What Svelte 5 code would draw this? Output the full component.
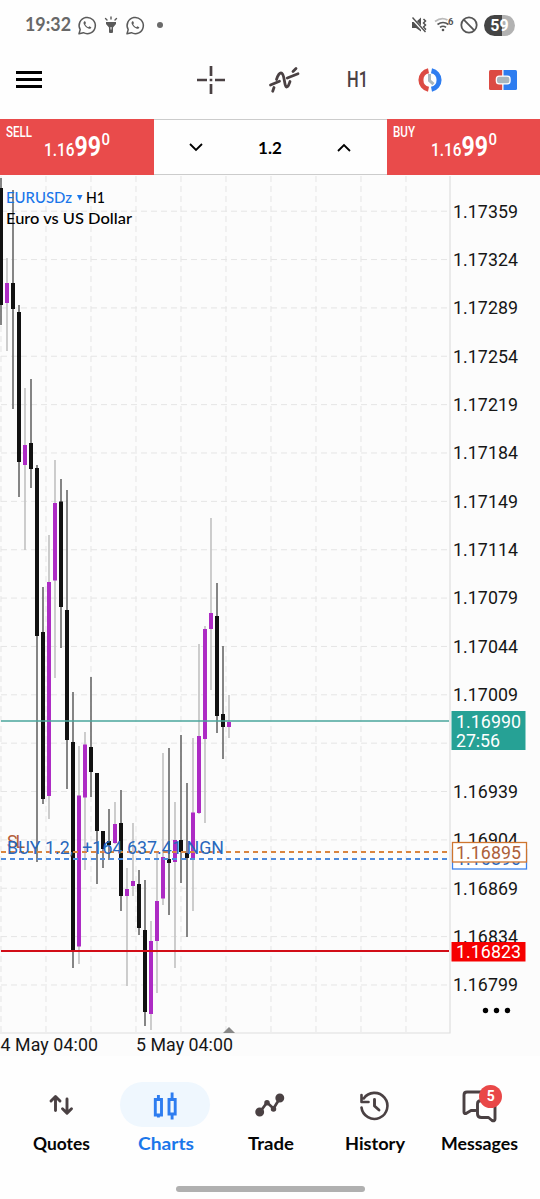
<script>
    const top = 175
    const gridX = [1, 46, 91, 136, 181, 226, 271, 316, 361, 406]
    const levels = Array.from({ length: 17 }, (_, i) => ({
        y: 211.2 + i * 48.36,
        price: (1.17359 - i * 0.00035).toFixed(5)
    }))

    // x, wick top, wick bottom, body top, body bottom, rising
    const candles = [
        [1, 178, 325, 188, 305, 0],
        [7, 258, 351, 283, 303, 1],
        [13, 190, 409, 283, 309, 0],
        [19, 305, 497, 312, 462, 0],
        [25, 388, 550, 445, 465, 1],
        [31, 379, 488, 443, 469, 0],
        [37, 465, 862, 468, 636, 0],
        [43, 587, 804, 632, 799, 0],
        [49, 535, 819, 582, 796, 1],
        [55, 460, 678, 503, 580.5, 1],
        [61, 479, 648, 501.5, 607, 0],
        [67, 490, 789, 610, 740, 0],
        [73, 692, 968, 742, 951, 0],
        [79, 746, 964, 795.5, 946.5, 1],
        [85, 732, 870, 744.5, 797.5, 1],
        [91, 677, 797, 747, 772, 0],
        [97, 773, 884, 773, 831, 0],
        [103, 831, 868, 831, 849, 0],
        [109, 809, 860, 841, 845, 0],
        [115, 802, 844, 824, 843, 1],
        [121, 790, 911, 823, 896, 0],
        [127, 868, 986, 889, 896, 1],
        [133, 823, 896, 881, 886, 1],
        [139, 870, 935, 884, 928, 0],
        [145, 880, 1026, 930, 1012, 0],
        [151, 921, 1030, 941, 1014, 1],
        [157, 852, 993, 901, 941, 1],
        [163, 753, 905, 857, 898.5, 1],
        [169, 748, 915, 859, 863, 0],
        [175, 802, 968, 840, 862, 1],
        [181, 735, 883, 840, 852, 0],
        [187, 783, 937, 853, 858, 0],
        [193, 738, 911, 812.5, 859, 1],
        [199, 644, 814, 736, 813, 1],
        [205, 626, 823, 629, 739, 1],
        [211, 518, 690, 613, 629, 1],
        [217, 583, 733, 616, 716, 0],
        [223, 646, 759, 714, 727, 0],
        [229, 695, 738, 722, 727, 1]
    ]

    const tabs = ["Quotes", "Charts", "Trade", "History", "Messages"]
    const tabWidths = [57, 56, 46, 60, 77]
</script>

{#snippet whatsapp()}
    <svg width="19" height="19" viewBox="0 0 19 19" fill="none" stroke="#5a5a5a" stroke-width="1.5">
        <path d="M1 17.8 2.2 13.6A8.1 8.1 0 1 1 5.4 16.7Z" stroke-linejoin="round" />
        <path d="M6.3 5.2c-.9.7-1 2-.3 3.3 1 1.900 2.500 3.300 4.400 4 1.300.5 2.500.1 3-1.100l-1.900-1.200-1.200 1c-1.500-.7-2.400-1.600-3.100-3l.8-1.100-.9-1.900Z" fill="#5a5a5a" stroke="none" />
    </svg>
{/snippet}

{#snippet quote(side)}
    <button class="quote">
        <span class="side">
            <svg width="60" height="16">
                <text x="0" y="12.5" font-size="14.5" textLength={side == "SELL" ? 26 : 22} lengthAdjust="spacingAndGlyphs">{side}</text>
            </svg>
        </span>
        <svg class="price" width="70" height="28">
            <text x="0" y="23" font-size="18" textLength="30.5" lengthAdjust="spacingAndGlyphs">1.16</text>
            <text x="30.5" y="23" font-size="28" font-weight="700" textLength="26.5" lengthAdjust="spacingAndGlyphs">99</text>
            <text x="57.5" y="12" font-size="17" textLength="8.5" lengthAdjust="spacingAndGlyphs">0</text>
        </svg>
    </button>
{/snippet}

<main>
    <header class="status">
        <svg class="clock" width="47" height="24">
            <text x="0" y="18" font-size="18" textLength="46" lengthAdjust="spacingAndGlyphs">19:32</text>
        </svg>
        {@render whatsapp()}
        <svg class="torch" width="14" height="18" viewBox="0 0 14 18" fill="#5a5a5a">
            <path d="M2 6h10v2L9 11.5V16q0 1-1 1H6q-1 0-1-1v-4.5L2 8Z" />
            <path d="M7 1v2M1.5 2.5 3 4M12.5 2.5 11 4" stroke="#5a5a5a" stroke-width="1.4" stroke-linecap="round" />
            <path d="M7 11v2.5" stroke="#fff" />
        </svg>
        {@render whatsapp()}
        <i class="dot"></i>
        <div class="signals">
            <svg width="17" height="18" viewBox="0 0 17 18">
                <path d="M1 6h4l5-4.5v14L5 12H1Z" fill="#505050" />
                <path d="m12.5 3 2 2-2 2 2 2-2 2 2 2-1.5 2" fill="none" stroke="#505050" stroke-width="1.5" />
                <path d="m1 2 13 14" stroke="#fff" stroke-width="3" />
                <path d="m1.5 1.5 13 14.5" stroke="#505050" stroke-width="1.4" />
            </svg>
            <svg width="20" height="18" viewBox="0 0 20 18" fill="none" stroke-width="1.7">
                <path d="M1 5.5q6.5-5 12.5-1.5" stroke="#bbb" />
                <path d="M3.5 8.5q5.5-4 11 0M6 11.4q3-2.3 6 0" stroke="#555" />
                <circle cx="9" cy="14" r="1.3" fill="#555" />
                <text x="14" y="9" font-size="9.5" font-weight="700" fill="#555">6</text>
            </svg>
            <svg width="18" height="18" viewBox="0 0 18 18" fill="none" stroke="#555" stroke-width="1.8">
                <circle cx="9" cy="9" r="7.7" />
                <path d="m3.7 3.7 10.6 10.6" />
            </svg>
            <span class="battery">59</span>
        </div>
    </header>

    <nav class="toolbar">
        <svg width="26" height="20" viewBox="0 0 26 20"><path d="M0 2.5h26M0 9.5h26M0 16.5h26" stroke="#000" stroke-width="2.8" /></svg>
        <svg class="cross" width="30" height="30" viewBox="0 0 30 30" stroke="#4a4143" stroke-width="2.7">
            <path d="M15 1v10M15 19v10M1 15h10M19 15h10M13.7 15h2.6" />
        </svg>
        <svg class="wave" width="32" height="30" viewBox="0 0 32 30" fill="none" stroke="#4a4143" stroke-width="2.8" stroke-linecap="round">
            <path d="M3.7 26.2 5 22.500M7.500 14.500C9 10 10 8 12 8c4 0 3 14 5.500 14 2 0 2.500-3 3.500-5.500M24 6.500 27 3.500" />
            <path d="M1.500 20 10.500 16.300M18.300 13 29 8.800" />
        </svg>
        <svg class="frame" width="24" height="22">
            <text x="1" y="18" font-size="22" textLength="21" lengthAdjust="spacingAndGlyphs">H1</text>
        </svg>
        <svg class="session" width="30" height="26" viewBox="0 0 30 26" fill="none">
            <path d="M13.5 3.700A9.500 9.500 0 0 0 13.500 22.300" stroke="#dc4b43" stroke-width="5" />
            <path d="M16.500 3.700A9.500 9.500 0 0 1 16.500 22.300" stroke="#2e7df0" stroke-width="5" />
            <path d="M14.500 7v6.500l4 3.700" stroke="#a9b6bd" stroke-width="3" />
        </svg>
        <svg class="one-click" width="30" height="22" viewBox="0 0 30 22">
            <path d="M2.500 1H14.200v20H2.500Q1 21 1 19.500v-17Q1 1 2.500 1Z" fill="#dc4b43" />
            <path d="M15.500 1h12Q29 1 29 2.500v17q0 1.500-1.500 1.500h-12Z" fill="#2e7df0" />
            <rect x="7.700" y="6.500" width="15" height="9" rx="3.500" fill="#fff" />
            <rect x="9" y="7.800" width="12.400" height="6.400" rx="2.200" fill="#a9b6bd" />
        </svg>
    </nav>

    <section class="trade">
        {@render quote("SELL")}
        <div class="volume">
            <svg width="14" height="9" viewBox="0 0 14 9"><path d="m1 1 6 6 6-6" /></svg>
            <span>1.2</span>
            <svg width="14" height="9" viewBox="0 0 14 9"><path d="m1 8 6-6 6 6" /></svg>
        </div>
        {@render quote("BUY")}
    </section>

    <svg class="chart" width="540" height="881" viewBox="0 {top} 540 881">
        <g class="grid">
            {#each gridX as x}
                <path d="M{x} 176V1032" />
            {/each}
            {#each levels as level}
                <path d="M1 {level.y}H449" />
            {/each}
        </g>
        <path d="M450 176V1033H0" fill="none" stroke="#dedede" stroke-width="1.2" />

        {#each candles as [x, high, low, open, close, rising]}
            <path d="M{x} {high}V{low}" stroke={rising ? "#c4c4c4" : "#707070"} stroke-width="1.7" />
            <rect x={x - 2} y={open} width="4" height={close - open} fill={rising ? "#ad2bc4" : "#111"} />
        {/each}

        <path d="M1 721H449" stroke="#4aa69d" stroke-width="1.4" />
        <path d="M1 951H449" stroke="#d20d17" stroke-width="2" />
        <path d="M1 852H449" stroke="#d9853f" stroke-width="1.9" stroke-dasharray="5 4" />
        <path d="M1 859H449" stroke="#4d8bdd" stroke-width="1.9" stroke-dasharray="5 4" />
        <path d="m223 1033 6-6 6 6Z" fill="#888" />

        <g class="hand">
            <text x="6" y="203" fill="#1a76ea" textLength="66" lengthAdjust="spacingAndGlyphs">EURUSDz</text>
            <path d="M77 195h5.5L79.800 200.500Z" fill="#1a76ea" />
            <text x="86" y="203" textLength="19" lengthAdjust="spacingAndGlyphs">H1</text>
            <text x="6" y="224" textLength="126" lengthAdjust="spacingAndGlyphs">Euro vs US Dollar</text>
        </g>

        <g class="labels">
            <text x="7" y="848" fill="#b5603a" textLength="18">SL</text>
            <text x="7" y="854" fill="#2767bd" textLength="217" xml:space="preserve">BUY 1.2,  +164 637.41 NGN</text>
            {#each levels as level, i}
                {#if i != 11}
                    <text x="453" y={level.y + 6.3} textLength="65">{level.price}</text>
                {/if}
            {/each}
            <text x="0.5" y="1051" textLength="97.5">4 May 04:00</text>
            <text x="136" y="1051" textLength="97">5 May 04:00</text>

            <rect x="451.5" y="711" width="74" height="39" fill="#26a195" />
            <text x="456" y="727.5" fill="#fff" textLength="65">1.16990</text>
            <text x="456" y="747" fill="#fff" textLength="44">27:56</text>

            <rect x="452.5" y="849.5" width="74" height="19.5" fill="#fff" stroke="#3d83ed" stroke-width="1.3" />
            <text x="456" y="865" fill="#2767bd" textLength="65">1.16890</text>
            <rect x="452.5" y="842.5" width="74" height="19.5" fill="#fff" stroke="#cf762f" stroke-width="1.3" />
            <text x="456" y="858.5" fill="#ad603a" textLength="65">1.16895</text>

            <rect x="451.5" y="942" width="74" height="19.5" fill="#f60000" />
            <text x="456" y="958" fill="#fff" textLength="65">1.16823</text>
        </g>

        <circle cx="485.5" cy="1010.5" r="2.7" />
        <circle cx="496.5" cy="1010.5" r="2.7" />
        <circle cx="507.5" cy="1010.5" r="2.7" />
    </svg>

    <nav class="tabs">
        {#each tabs as tab, i}
            <div class="tab" class:active={tab == "Charts"}>
                <span class="icon">
                    <svg width="38" height="34" viewBox="0 0 38 34" fill="none" stroke="#4a4143" stroke-width="2.9" stroke-linecap="round" stroke-linejoin="round">
                        {#if tab == "Quotes"}
                            <path d="M13.5 22.5V9M9 13l4.500-4.500 4.500 4.500M25 11V25M20.500 20.700l4.500 4.500 4.500-4.500" />
                        {:else if tab == "Charts"}
                            <g stroke="#2e7df0" stroke-linecap="butt" stroke-linejoin="miter">
                                <path d="M9.300 11.500h6.200V27H9.300ZM12.400 7v4.500M12.400 27v2.500M23 11.500h6.200V26H23ZM26.100 4.500v7M26.100 26v5.500" />
                            </g>
                        {:else if tab == "Trade"}
                            <path d="m9 24 7-9.500 6.500 6L29 10" stroke-width="2.7" />
                            <circle cx="8.700" cy="24" r="3" fill="#4a4143" />
                            <circle cx="16" cy="14.800" r="1.300" fill="#4a4143" />
                            <circle cx="22.500" cy="21" r="1.300" fill="#4a4143" />
                            <circle cx="28.800" cy="10" r="3" fill="#4a4143" />
                        {:else if tab == "History"}
                            <path d="M5.500 19.500A13 13 0 1 0 7.700 10.500M5.500 7V14H12.500" stroke-width="2.6" />
                            <path d="M18.500 11.500v6.500l4.500 4" />
                        {:else}
                            <path d="M15.500 22.500H11L6 25.500q-2 .5-2-1.500V7q0-3 3-3h18q3 0 3 3v5" />
                            <path d="M20.500 12.800H31q4 0 4 3.500V31q0 2.500-3 1.500l-3.500-3H21.500q-4 0-4-3.500V16q0-3.200 3-3.200Z" fill="#fff" />
                        {/if}
                    </svg>
                    {#if tab == "Messages"}
                        <b class="badge">5</b>
                    {/if}
                </span>
                <svg class="name" width={tabWidths[i]} height="24">
                    <text x="0" y="17" textLength={tabWidths[i]} lengthAdjust="spacingAndGlyphs">{tab}</text>
                </svg>
            </div>
        {/each}
    </nav>
    <div class="handle"></div>
</main>

<style>
    :global(body) {
        margin: 0;
        background: #fff;
    }

    main {
        display: flex;
        flex-direction: column;
        width: 540px;
        height: 1199px;
        overflow: hidden;
        background: #fefefe;
        font-family: Roboto, sans-serif;
    }

    svg {
        display: block;
        flex: none;
        overflow: visible;
    }

    .status {
        display: flex;
        align-items: center;
        height: 50px;
        padding: 0 25px;
    }

    .clock {
        margin-right: 6px;
        font-family: Lato, sans-serif;
        font-weight: 700;
        fill: #686868;
    }

    .torch {
        margin: 0 8px 0 7px;
    }

    .dot {
        width: 6px;
        height: 6px;
        margin-left: 12px;
        border-radius: 50%;
        background: #6a6a6a;
    }

    .signals {
        display: flex;
        align-items: center;
        gap: 6px;
        margin-left: auto;
    }

    .battery {
        width: 31px;
        height: 21px;
        border-radius: 11px;
        background: linear-gradient(90deg, #444 59%, #b2b2b2 59%);
        color: #fff;
        font-size: 16px;
        font-weight: 700;
        line-height: 21px;
        text-align: center;
    }

    .toolbar {
        display: flex;
        align-items: center;
        height: 59px;
        padding: 0 22px 10px 16px;
    }

    .cross {
        margin-left: 154px;
    }

    .wave {
        margin-left: 43px;
    }

    .frame {
        margin-left: 45px;
        fill: #4a4143;
        font-weight: 500;
    }

    .session {
        margin-left: 45px;
    }

    .one-click {
        margin-left: auto;
    }

    .trade {
        display: grid;
        grid-template-columns: 153.5px 1fr 153.5px;
        height: 56px;
    }

    .quote {
        position: relative;
        display: flex;
        justify-content: center;
        align-items: center;
        padding: 0;
        border: none;
        background: #e94b4b;
        font-family: Roboto, sans-serif;
        font-weight: 500;
        fill: #fff;
    }

    .side {
        position: absolute;
        top: 5px;
        left: 6px;
    }

    .price {
        margin: 0 0 1px 5px;
    }

    .volume {
        display: flex;
        align-items: center;
        justify-content: space-between;
        padding: 0 35px;
        border-top: 1px solid #ccc;
        border-bottom: 1px solid #ccc;
        font: 700 17px Lato, sans-serif;
    }

    .volume path {
        fill: none;
        stroke: #000;
        stroke-width: 1.8;
    }

    .chart {
        background: #fcfcfc;
    }

    .grid {
        fill: none;
        stroke: #e5e5e5;
        stroke-dasharray: 6 4;
    }

    .hand {
        font: 500 16px Lato, sans-serif;
    }

    .labels {
        font-size: 17.8px;
        fill: #161616;
    }

    .tabs {
        display: grid;
        grid-template-columns: repeat(5, 104.6px);
        justify-content: center;
        height: 104px;
        padding-top: 26px;
    }

    .tab {
        display: flex;
        flex-direction: column;
        align-items: center;
    }

    .icon {
        position: relative;
        display: flex;
        align-items: center;
        justify-content: center;
        width: 90px;
        height: 45px;
        border-radius: 23px;
    }

    .active .icon {
        background: #eff7fe;
    }

    .name {
        margin: 6px 0 0 1px;
        font: 700 16.5px Lato, sans-serif;
        fill: #050505;
    }

    .active .name {
        fill: #1a76ea;
    }

    .badge {
        position: absolute;
        top: 3px;
        right: 22px;
        width: 23px;
        height: 23px;
        border-radius: 50%;
        background: #e94848;
        color: #fff;
        font-size: 14px;
        line-height: 23px;
        text-align: center;
    }

    .handle {
        width: 189px;
        height: 6px;
        margin: 0 auto;
        border-radius: 3px;
        background: #b0b0b0;
    }
</style>
